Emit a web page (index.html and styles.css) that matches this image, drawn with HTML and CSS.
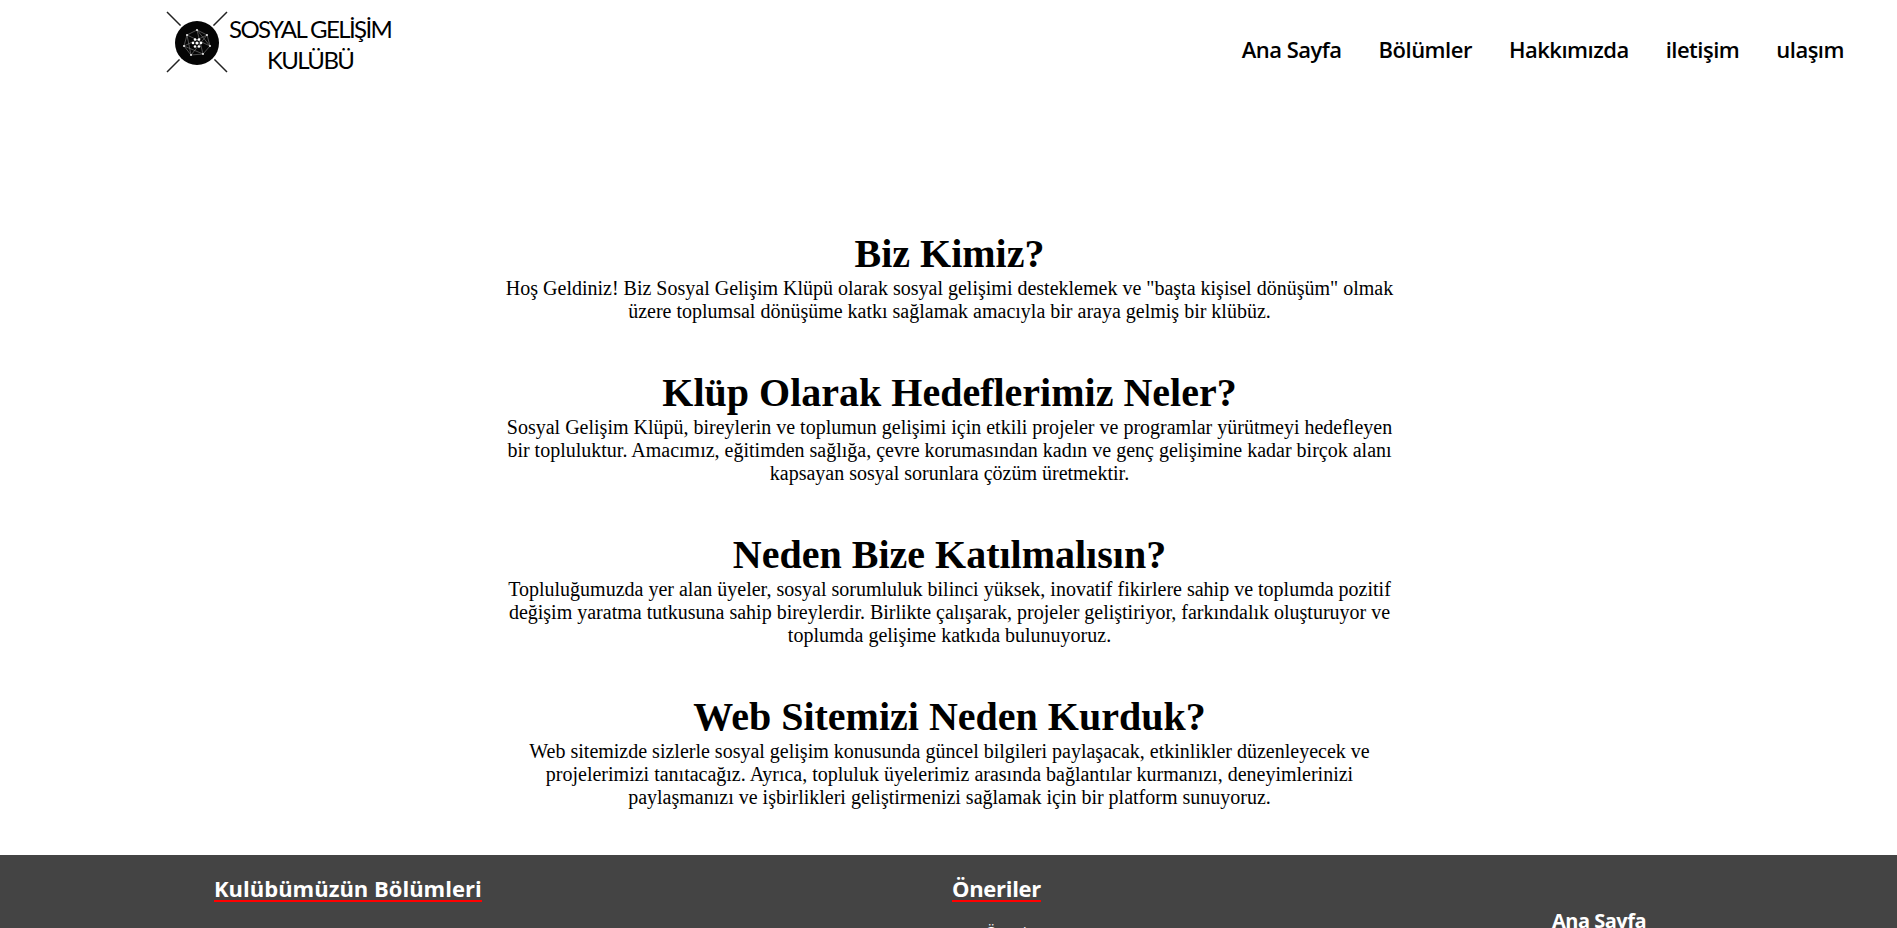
FILE: index.html
```html
<!DOCTYPE html>
<html lang="tr">
<head>
  <meta charset="UTF-8" />
  <title>Sosyal Gelişim Kulübü</title>
  <link rel="stylesheet" href="styles.css">
</head>
<body>
  <header class="topbar">
    <a class="logo" href="#">
      <svg class="logo-mark" width="62" height="62" viewBox="0 0 62 62">
        <path d="M1 1 L61 61 M61 1 L1 61" stroke="#222" stroke-width="1.5" />
        <circle cx="31" cy="32" r="24" fill="#fff" />
        <circle cx="31" cy="32" r="22" fill="#050505" />
        <g fill="none" stroke="#999" stroke-width="0.5">
          <path d="M31 19 L41 24 L44 35 L37 43 L25 44 L18 35 L21 24 Z" />
          <path d="M31 19 L37 43 L18 35 L41 24 L25 44 L21 24 L44 35 Z" />
        </g>
        <g fill="#fff">
          <circle cx="31" cy="32" r="1.6" />
          <circle cx="27" cy="32" r="1.3" />
          <circle cx="35" cy="32" r="1.3" />
          <circle cx="29" cy="28.5" r="1.3" />
          <circle cx="33" cy="28.5" r="1.3" />
          <circle cx="29" cy="35.5" r="1.3" />
          <circle cx="33" cy="35.5" r="1.3" />
          <circle cx="31" cy="19" r="0.9" />
          <circle cx="41" cy="24" r="0.9" />
          <circle cx="44" cy="35" r="0.9" />
          <circle cx="37" cy="43" r="0.9" />
          <circle cx="25" cy="44" r="0.9" />
          <circle cx="18" cy="35" r="0.9" />
          <circle cx="21" cy="24" r="0.9" />
        </g>
      </svg>
      <span class="logo-text">SOSYAL GELİŞİM<br>KULÜBÜ</span>
    </a>
    <nav class="menu">
      <a href="#">Ana Sayfa</a>
      <a href="#">Bölümler</a>
      <a href="#">Hakkımızda</a>
      <a href="#">iletişim</a>
      <a href="#">ulaşım</a>
    </nav>
  </header>

  <main class="content">
    <section>
      <h1>Biz Kimiz?</h1>
      <p>Hoş Geldiniz! Biz Sosyal Gelişim Klüpü olarak sosyal gelişimi desteklemek ve "başta kişisel dönüşüm" olmak üzere toplumsal dönüşüme katkı sağlamak amacıyla bir araya gelmiş bir klübüz.</p>
    </section>
    <section>
      <h1>Klüp Olarak Hedeflerimiz Neler?</h1>
      <p>Sosyal Gelişim Klüpü, bireylerin ve toplumun gelişimi için etkili projeler ve programlar yürütmeyi hedefleyen bir topluluktur. Amacımız, eğitimden sağlığa, çevre korumasından kadın ve genç gelişimine kadar birçok alanı kapsayan sosyal sorunlara çözüm üretmektir.</p>
    </section>
    <section>
      <h1>Neden Bize Katılmalısın?</h1>
      <p>Topluluğumuzda yer alan üyeler, sosyal sorumluluk bilinci yüksek, inovatif fikirlere sahip ve toplumda pozitif değişim yaratma tutkusuna sahip bireylerdir. Birlikte çalışarak, projeler geliştiriyor, farkındalık oluşturuyor ve toplumda gelişime katkıda bulunuyoruz.</p>
    </section>
    <section>
      <h1>Web Sitemizi Neden Kurduk?</h1>
      <p>Web sitemizde sizlerle sosyal gelişim konusunda güncel bilgileri paylaşacak, etkinlikler düzenleyecek ve projelerimizi tanıtacağız. Ayrıca, topluluk üyelerimiz arasında bağlantılar kurmanızı, deneyimlerinizi paylaşmanızı ve işbirlikleri geliştirmenizi sağlamak için bir platform sunuyoruz.</p>
    </section>
  </main>

  <footer class="footer">
    <div class="col col-sections">
      <h3>Kulübümüzün Bölümleri</h3>
    </div>
    <div class="col col-tips">
      <h3>Öneriler</h3>
      <a href="#">Öneri</a>
    </div>
    <div class="col col-links">
      <a href="#">Ana Sayfa</a>
    </div>
  </footer>
</body>
</html>
```

FILE: styles.css
```css
html, body { height: 928px; overflow: hidden; }
body {
  margin: 0;
  background: white;
  color: black;
  font-family: "Liberation Serif", serif;
}
a { color: inherit; text-decoration: none; }
.topbar {
  height: 80px;
  display: flex;
  justify-content: space-between;
  padding: 11px 53px 0 166px;
  box-sizing: border-box;
  font-family: "Open Sans", sans-serif;
}
.logo { display: flex; align-items: flex-start; }
.logo-mark { flex: none; }
.logo-text {
  margin: 2px 0 0 1px;
  font-family: "Lato", sans-serif;
  font-size: 24px;
  line-height: 31px;
  text-align: center;
  letter-spacing: -1.6px;
}
.menu {
  display: flex;
  gap: 37px;
  padding-top: 23px;
  font-size: 22px;
  font-weight: 600;
  letter-spacing: -0.5px;
}
.content {
  width: 902px;
  height: 775px;
  margin: 0 auto;
  padding: 151px 0 0 2px;
  text-align: center;
  box-sizing: border-box;
}
.content section { margin-bottom: 47px; }
h1 {
  margin: 0;
  font-size: 40px;
  line-height: 46px;
  font-weight: bold;
}
p {
  margin: 0;
  font-size: 20px;
  line-height: 23px;
}
.footer {
  height: 73px;
  background: #444;
  color: white;
  display: flex;
  font-family: "Open Sans", sans-serif;
  font-weight: 700;
  overflow: hidden;
}
.footer h3 {
  margin: 0;
  display: inline-block;
  font-size: 22px;
  line-height: 24px;
  border-bottom: 2px solid red;
}
.col { padding-top: 21px; }
.col-sections { width: 952px; padding-left: 214px; box-sizing: border-box; }
.col-tips { width: 600px; }
.col-tips h3 { letter-spacing: -0.3px; }
.col-tips a { display: block; margin: 20px 0 0 33px; font-weight: 400; }
.col-links { padding-top: 52px; font-size: 20px; letter-spacing: -0.5px; }
```
